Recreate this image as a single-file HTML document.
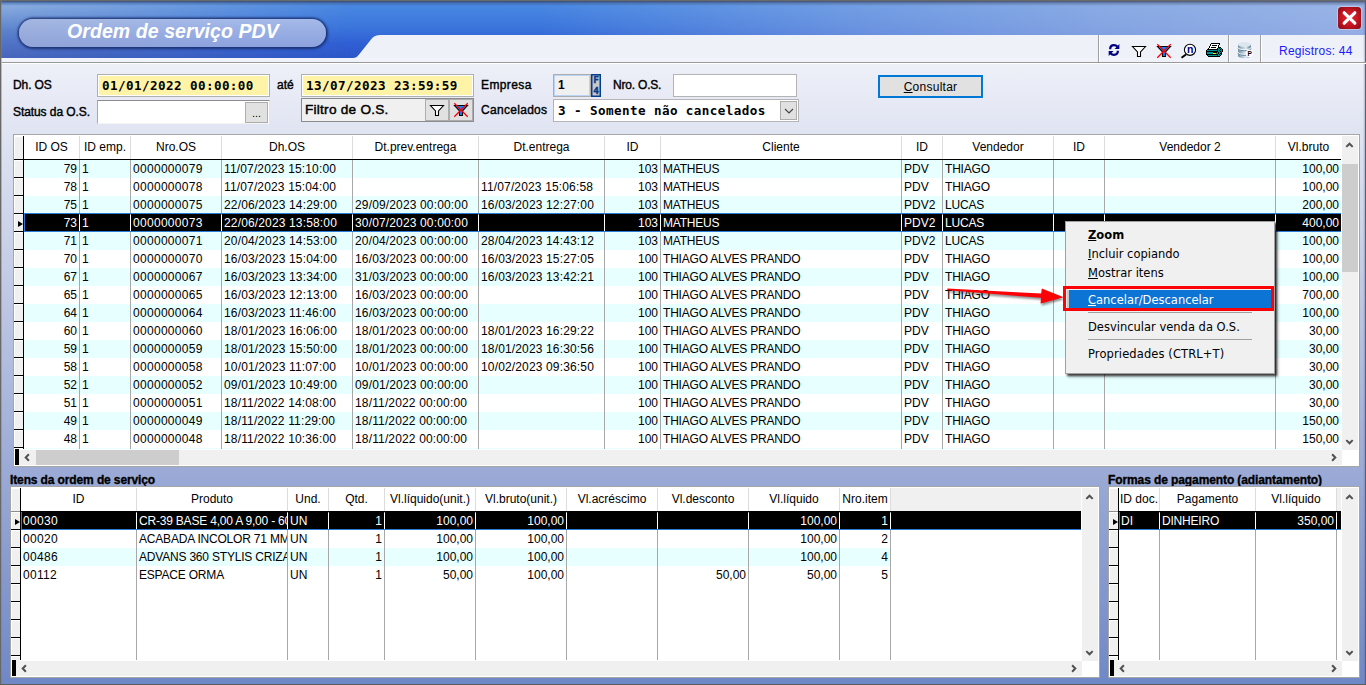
<!DOCTYPE html>
<html lang="pt-BR">
<head>
<meta charset="utf-8">
<title>Ordem de serviço PDV</title>
<style>
*{box-sizing:border-box;margin:0;padding:0}
html,body{width:1366px;height:685px;overflow:hidden;background:#e4e7f3;font-family:"Liberation Sans",Arial,sans-serif;font-size:12px;color:#000}
body{position:relative}
.abs,.grid,.grid>div{position:absolute}
/* window frame */
#frameL{left:0;top:0;width:2px;height:685px;background:linear-gradient(90deg,#686868 0,#686868 50%,rgba(120,125,140,.45) 50%,rgba(120,125,140,.45) 100%)}
#frameT{left:0;top:0;width:1366px;height:1px;background:#6a6a6a}
#hdr{left:1px;top:1px;width:1365px;height:57px;overflow:hidden;
 background:
 linear-gradient(180deg,rgba(50,55,75,.75) 0,rgba(50,60,90,.35) 2px,rgba(40,50,90,0) 5px),
 linear-gradient(90deg,rgba(172,190,230,0) 540px,rgba(172,190,230,.42) 860px,rgba(176,192,230,.62) 1100px,rgba(180,195,232,.75) 1365px),
 linear-gradient(180deg,#4b8be3 0,#3c76dc 45%,#2f5fd4 75%,#2c56c8 100%);}
#hdrL{left:1px;top:1px;width:352px;height:57px;background:linear-gradient(180deg,rgba(60,70,100,.0) 0,rgba(178,194,220,.62) 5px,rgba(120,145,195,.58) 50%,rgba(88,112,178,.6) 100%);-webkit-mask-image:linear-gradient(90deg,#000 0,rgba(0,0,0,.62) 150px,transparent 350px);mask-image:linear-gradient(90deg,#000 0,rgba(0,0,0,.62) 150px,transparent 350px)}
#upper{left:1px;top:58px;width:1364px;height:409px;background:linear-gradient(180deg,#f2f4fa 0,#eef0f8 6px,#9cabd6 100%)}
#lower{left:1px;top:467px;width:1364px;height:217px;background:linear-gradient(180deg,#9cabd6 0,#6f88c6 100%)}
#sep1{left:2px;top:62px;width:1364px;height:1px;background:#9a9a9a}
#sep2{left:2px;top:63px;width:1364px;height:1px;background:#fff}
#frameR{left:1363px;top:0;width:3px;height:685px;background:linear-gradient(90deg,rgba(110,120,160,.12) 0,rgba(110,120,160,.12) 33.3%,rgba(100,110,150,.3) 33.3%,rgba(100,110,150,.3) 66.6%,#5e6068 66.6%,#5e6068 100%)}
#frameB{left:0;top:684px;width:1366px;height:1px;background:#5c5c60}
#pill{left:19px;top:19px;width:307px;height:28px;border-radius:14px;background:linear-gradient(90deg,rgba(160,170,200,.25) 0,rgba(160,170,200,0) 60%),linear-gradient(180deg,#a5bae8 0,#97ade3 50%,#8da2dd 100%);box-shadow:0 0 2px 1.5px rgba(25,45,110,.8),1px 1px 3px 1px rgba(20,40,100,.5)}
#title{left:67px;top:19px;font:italic bold 19.5px "Liberation Sans",Arial,sans-serif;color:#fff;white-space:nowrap;line-height:24px;letter-spacing:.08px}
.lbl{white-space:nowrap;line-height:14px;font-size:12px;-webkit-text-stroke:.4px #000}
.inp{background:#fff;border:1px solid #a9a9a9;border-top-color:#8e8e8e}
.yel{background:#fff3a8;border:1px solid #b0b0b0;box-shadow:inset 0 0 0 1px #fff}
.mono{font:bold 12.6px "DejaVu Sans Mono","Liberation Mono",monospace;letter-spacing:.41px;white-space:nowrap}
/* grids */
.grid{background:#fff;box-shadow:inset 0 0 0 1px #a6a6a6;overflow:hidden}
.ind{background:#f0f0f0;border-top:1px solid #fff}
.indl{height:1px;background:#000}
.vblk{width:1px;background:#000}
.hblk{height:1px;background:#000}
.hc{background:#fff;text-align:center;line-height:24px;white-space:nowrap;overflow:hidden;font-size:12px;color:#000}
.hb{width:1px;background:#dcdcdc}
.hfill{background:#f0f0f0}
.row{background:#fff}
.row.alt{background:#e8ffff}
.row.sel{background:#000}
.c{height:18px;line-height:18px;white-space:nowrap;overflow:hidden;font-size:12px;padding:0 2px 0 2px}
.c.r{text-align:right}
.ls3{letter-spacing:.3px}.ls1{letter-spacing:.15px}.lsn{letter-spacing:-.2px}
.c.w{color:#fff}
.vb{width:1px;background:#a8a8a8}
.vbw{width:1px;background:#fff}
.selframe{border-top:1px solid #2a7ad8;border-bottom:1px solid #2a7ad8;border-left:1px solid #2a7ad8}
.selframe.nt{border-top:none}
.arrow{width:0;height:0;border-left:5px solid #000;border-top:3.5px solid transparent;border-bottom:3.5px solid transparent}
.trk{background:#f0f0f0}
.thumb{background:#cdcdcd}
.blk{background:#000}
.chev{position:absolute}
/* menu */
#menu{left:1065px;top:221px;width:210px;height:153px;background:#f0f0f0;border:1px solid #a0a0a0;box-shadow:2px 2px 2px rgba(0,0,0,.68),3px 3px 3px rgba(0,0,0,.25);font-family:"DejaVu Sans","Liberation Sans",sans-serif;font-size:11.5px}
#menu .mi{position:absolute;left:22px;white-space:nowrap;line-height:16px;color:#000}
#menu .ms{position:absolute;left:22px;width:164px;height:1px;background:#a0a0a0}
#menu u{text-decoration:underline;text-underline-offset:1px}
</style>
</head>
<body>
<div id="upper" class="abs"></div>
<div id="lower" class="abs"></div>
<div id="hdr" class="abs">
<svg class="abs" style="left:0;top:0" width="1365" height="57" viewBox="1 1 1365 57">
<path d="M352 58 C356 58 357 57 359 54.5 L371 39.5 C374 36 376 35 382 35 L1366 35 L1366 58 Z" fill="#eff1f8"/>
</svg>
</div>
<div id="hdrL" class="abs"></div>
<div id="frameT" class="abs"></div>
<div id="frameL" class="abs"></div>
<div id="frameR" class="abs"></div>
<div id="frameB" class="abs"></div>
<div id="sep1" class="abs"></div><div id="sep2" class="abs"></div>
<div id="pill" class="abs"></div>
<div id="title" class="abs">Ordem de serviço PDV</div>

<!-- close button -->
<div class="abs" style="left:1338px;top:7px;width:23px;height:22px;border-radius:3.5px;background:radial-gradient(ellipse at 50% 50%,#e21b2b 0,#d01724 40%,#a5101a 75%,#7d0b13 100%);box-shadow:0 0 0 1px rgba(225,215,235,.55)"></div>
<svg class="abs" style="left:1338px;top:7px" width="23" height="22" viewBox="0 0 23 22"><path d="M6.2 5.8 L16.8 16.2 M16.8 5.8 L6.2 16.2" stroke="#fff" stroke-width="3.2" stroke-linecap="round"/></svg>

<!-- toolbar -->
<div class="abs" style="left:1098px;top:35px;width:1px;height:27px;background:#a0a0a0"></div><div class="abs" style="left:1099px;top:35px;width:1px;height:27px;background:#fff"></div>
<div class="abs" style="left:1228px;top:35px;width:1px;height:27px;background:#a0a0a0"></div><div class="abs" style="left:1229px;top:35px;width:1px;height:27px;background:#fff"></div>
<div class="abs" style="left:1260px;top:35px;width:1px;height:27px;background:#a0a0a0"></div><div class="abs" style="left:1261px;top:35px;width:1px;height:27px;background:#fff"></div>
<svg class="abs" style="left:1104px;top:38px" width="152" height="24" viewBox="1104 38 152 24" shape-rendering="auto">
<!-- refresh -->
<g fill="none" stroke="#000080" stroke-width="2.2">
<path d="M1110.2 49.2 C1110.2 46.4 1112 45.2 1114 45.2 C1115.6 45.2 1116.6 45.8 1117.4 46.8"/>
<path d="M1117.9 50.8 C1117.9 53.6 1116 54.8 1114 54.8 C1112.4 54.8 1111.4 54.2 1110.6 53.2"/>
</g>
<path d="M1119.4 44 L1119.4 49 L1114.6 49 Z" fill="#000080"/>
<path d="M1108.7 56 L1108.7 51 L1113.5 51 Z" fill="#000080"/>
<!-- funnel -->
<path d="M1132.5 46.5 L1145.5 46.5 L1140.5 52 L1140.5 56.5 L1137.5 56.5 L1137.5 52 Z" fill="#fff" stroke="#000" stroke-width="1.1" stroke-linejoin="miter"/>
<!-- funnel X -->
<path d="M1157.5 46.5 L1170.5 46.5 L1165.5 52 L1165.5 56.5 L1162.5 56.5 L1162.5 52 Z" fill="#0a84ff" stroke="#000" stroke-width="1.1"/>
<path d="M1157.3 44.3 L1170.7 57.7 M1170.7 44.3 L1157.3 57.7" stroke="#ff0000" stroke-width="1.3"/>
<!-- magnifier -->
<path d="M1186 54.5 L1181.5 57.8" stroke="#000" stroke-width="2" stroke-linecap="butt"/>
<circle cx="1190" cy="49.8" r="5.6" fill="#fff" stroke="#000" stroke-width="1.1"/>
<text x="1190.1" y="53.4" font-family="Liberation Sans,Arial,sans-serif" font-weight="bold" font-size="10.5" text-anchor="middle" fill="#000080">n</text>
<!-- printer -->
<g shape-rendering="crispEdges">
<rect x="1211" y="43" width="9" height="1" fill="#000"/>
<rect x="1210" y="44" width="1" height="1" fill="#000"/>
<rect x="1211" y="44" width="8" height="1" fill="#fff"/>
<rect x="1219" y="44" width="1" height="1" fill="#000"/>
<rect x="1210" y="45" width="1" height="1" fill="#000"/>
<rect x="1211" y="45" width="1" height="1" fill="#fff"/>
<rect x="1212" y="45" width="5" height="1" fill="#000"/>
<rect x="1217" y="45" width="1" height="1" fill="#fff"/>
<rect x="1218" y="45" width="1" height="1" fill="#000"/>
<rect x="1209" y="46" width="1" height="1" fill="#000"/>
<rect x="1210" y="46" width="8" height="1" fill="#fff"/>
<rect x="1218" y="46" width="1" height="1" fill="#000"/>
<rect x="1209" y="47" width="1" height="1" fill="#000"/>
<rect x="1210" y="47" width="1" height="1" fill="#fff"/>
<rect x="1211" y="47" width="5" height="1" fill="#000"/>
<rect x="1216" y="47" width="2" height="1" fill="#fff"/>
<rect x="1218" y="47" width="1" height="1" fill="#000"/>
<rect x="1219" y="47" width="2" height="1" fill="#000"/>
<rect x="1208" y="48" width="1" height="1" fill="#000"/>
<rect x="1209" y="48" width="8" height="1" fill="#fff"/>
<rect x="1217" y="48" width="1" height="1" fill="#000"/>
<rect x="1218" y="48" width="1" height="1" fill="#009090"/>
<rect x="1219" y="48" width="1" height="1" fill="#000"/>
<rect x="1220" y="48" width="1" height="1" fill="#009090"/>
<rect x="1221" y="48" width="1" height="1" fill="#000"/>
<rect x="1207" y="49" width="11" height="1" fill="#000"/>
<rect x="1218" y="49" width="1" height="1" fill="#009090"/>
<rect x="1219" y="49" width="1" height="1" fill="#009090"/>
<rect x="1220" y="49" width="1" height="1" fill="#000"/>
<rect x="1221" y="49" width="1" height="1" fill="#009090"/>
<rect x="1222" y="49" width="1" height="1" fill="#000"/>
<rect x="1206" y="50" width="1" height="1" fill="#000"/>
<rect x="1207" y="50" width="10" height="1" fill="#009090"/>
<rect x="1217" y="50" width="1" height="1" fill="#000"/>
<rect x="1218" y="50" width="1" height="1" fill="#009090"/>
<rect x="1219" y="50" width="1" height="1" fill="#000"/>
<rect x="1220" y="50" width="2" height="1" fill="#009090"/>
<rect x="1222" y="50" width="1" height="1" fill="#000"/>
<rect x="1206" y="51" width="12" height="1" fill="#000"/>
<rect x="1218" y="51" width="1" height="1" fill="#009090"/>
<rect x="1219" y="51" width="1" height="1" fill="#009090"/>
<rect x="1220" y="51" width="1" height="1" fill="#000"/>
<rect x="1221" y="51" width="1" height="1" fill="#009090"/>
<rect x="1222" y="51" width="1" height="1" fill="#000"/>
<rect x="1206" y="52" width="1" height="1" fill="#000"/>
<rect x="1207" y="52" width="6" height="1" fill="#009090"/>
<rect x="1213" y="52" width="4" height="1" fill="#000"/>
<rect x="1217" y="52" width="1" height="1" fill="#009090"/>
<rect x="1218" y="52" width="1" height="1" fill="#000"/>
<rect x="1219" y="52" width="2" height="1" fill="#009090"/>
<rect x="1221" y="52" width="1" height="1" fill="#000"/>
<rect x="1206" y="53" width="1" height="1" fill="#000"/>
<rect x="1207" y="53" width="6" height="1" fill="#009090"/>
<rect x="1213" y="53" width="3" height="1" fill="#f5ee00"/>
<rect x="1216" y="53" width="2" height="1" fill="#009090"/>
<rect x="1218" y="53" width="1" height="1" fill="#000"/>
<rect x="1219" y="53" width="1" height="1" fill="#009090"/>
<rect x="1220" y="53" width="2" height="1" fill="#000"/>
<rect x="1206" y="54" width="12" height="1" fill="#000"/>
<rect x="1218" y="54" width="1" height="1" fill="#009090"/>
<rect x="1219" y="54" width="1" height="1" fill="#000"/>
<rect x="1220" y="54" width="1" height="1" fill="#009090"/>
<rect x="1221" y="54" width="1" height="1" fill="#000"/>
<rect x="1207" y="55" width="1" height="1" fill="#000"/>
<rect x="1208" y="55" width="9" height="1" fill="#009090"/>
<rect x="1217" y="55" width="1" height="1" fill="#000"/>
<rect x="1218" y="55" width="2" height="1" fill="#009090"/>
<rect x="1220" y="55" width="1" height="1" fill="#000"/>
<rect x="1208" y="56" width="12" height="1" fill="#000"/>
</g>
<!-- database -->
<defs><linearGradient id="dbg" x1="0" x2="1" y1="0" y2="0"><stop offset="0" stop-color="#6a899f"/><stop offset=".3" stop-color="#a9bfcd"/><stop offset=".62" stop-color="#e3ebf0"/><stop offset=".8" stop-color="#8fa9ba"/><stop offset="1" stop-color="#658399"/></linearGradient></defs>
<g>
<path d="M1238 53.6 L1238 56 A6.5 2.2 0 0 0 1251 56 L1251 53.6 A6.5 2.2 0 0 1 1238 53.6 Z" fill="url(#dbg)"/>
<path d="M1238 49 L1238 51.6 A6.5 2.2 0 0 0 1251 51.6 L1251 49 A6.5 2.2 0 0 1 1238 49 Z" fill="url(#dbg)"/>
<path d="M1238 53.2 A6.5 2.2 0 0 0 1251 53.2" fill="none" stroke="#5f7f96" stroke-width="1"/>
<path d="M1238 48.6 A6.5 2.2 0 0 0 1251 48.6" fill="none" stroke="#5f7f96" stroke-width="1"/>
<path d="M1238 44.6 L1238 47 A6.5 2.2 0 0 0 1251 47 L1251 44.6 Z" fill="url(#dbg)"/>
<ellipse cx="1244.5" cy="44.6" rx="6.5" ry="2.5" fill="#dde6ec"/>
<circle cx="1249.3" cy="53.5" r="3.7" fill="#fff"/>
<text x="1249.7" y="55.9" font-family="Liberation Sans,Arial,sans-serif" font-weight="bold" font-size="6.6" text-anchor="middle" fill="#000">P</text>
</g>
</svg>

<div class="abs" style="left:1279px;top:44px;font-size:12px;letter-spacing:.22px;color:#1a1aff;line-height:14px;white-space:nowrap">Registros: 44</div>

<!-- form -->
<div class="abs lbl" style="left:13px;top:78px;letter-spacing:-.1px">Dh. OS</div>
<div class="abs lbl" style="left:13px;top:105px;letter-spacing:-.08px">Status da O.S.</div>
<div class="abs yel" style="left:97px;top:74px;width:173px;height:23px"></div>
<div class="abs mono" style="left:102px;top:78px;line-height:16px">01/01/2022 00:00:00</div>
<div class="abs lbl" style="left:277px;top:78px">até</div>
<div class="abs yel" style="left:301px;top:74px;width:173px;height:23px"></div>
<div class="abs mono" style="left:306px;top:78px;line-height:16px">13/07/2023 23:59:59</div>
<div class="abs inp" style="left:97px;top:100px;width:173px;height:24px;border-bottom-color:#f4f4f4;border-right-color:#e6e6e6"></div>
<div class="abs" style="left:245px;top:102px;width:23px;height:21px;background:#e1e1e1;border:1px solid #adadad;text-align:center;line-height:20px;font-size:11px">...</div>
<div class="abs inp" style="left:301px;top:98px;width:173px;height:24px;background:#f0f0f0;border-color:#8c8c8c"></div>
<div class="abs" style="left:305px;top:102px;font-size:13.6px;line-height:16px;white-space:nowrap;letter-spacing:.25px;-webkit-text-stroke:.45px #000">Filtro de O.S.</div>
<div class="abs" style="left:425px;top:99px;width:24px;height:22px;background:#e1e1e1;border:1px solid #adadad"></div>
<div class="abs" style="left:449px;top:99px;width:24px;height:22px;background:#e1e1e1;border:1px solid #adadad"></div>
<svg class="abs" style="left:425px;top:99px" width="48" height="22" viewBox="425 99 48 22">
<path d="M430.5 105.5 L443.5 105.5 L438.5 111 L438.5 115.5 L435.5 115.5 L435.5 111 Z" fill="#fff" stroke="#000" stroke-width="1.1"/>
<path d="M454.5 105.5 L467.5 105.5 L462.5 111 L462.5 115.5 L459.5 115.5 L459.5 111 Z" fill="#0a84ff" stroke="#000" stroke-width="1.1"/>
<path d="M454.3 103.3 L467.7 116.7 M467.7 103.3 L454.3 116.7" stroke="#ff0000" stroke-width="1.3"/>
</svg>
<div class="abs lbl" style="left:481px;top:78px;letter-spacing:.4px">Empresa</div>
<div class="abs lbl" style="left:481px;top:103px;letter-spacing:.3px">Cancelados</div>
<div class="abs" style="left:553px;top:74px;width:38px;height:23px;background:#f0f0f0;border:1px solid #adadad;box-shadow:inset 0 0 0 1px #b9d4f5"></div>
<div class="abs" style="left:558px;top:78px;line-height:14px;font-weight:bold;font-size:12px">1</div>
<div class="abs" style="left:591px;top:74px;width:10px;height:23px;background:#c9c9c9;border:1px solid #063c8c;box-shadow:inset 0 0 0 .5px #063c8c"></div>
<div class="abs" style="left:591px;top:75px;width:10px;text-align:center;font:bold 9.5px 'DejaVu Sans Mono','Liberation Mono',monospace;line-height:10.5px;color:#063c8c;-webkit-text-stroke:.4px #063c8c">F<br>4</div>
<div class="abs lbl" style="left:613px;top:78px;letter-spacing:-.2px">Nro. O.S.</div>
<div class="abs inp" style="left:673px;top:74px;width:124px;height:23px;border-color:#b4b4b4"></div>
<div class="abs inp" style="left:553px;top:99px;width:246px;height:23px;border-color:#b4b4b4"></div>
<div class="abs mono" style="left:558px;top:103px;line-height:16px">3 - Somente não cancelados</div>
<div class="abs" style="left:780px;top:101px;width:17px;height:19px;background:#e1e1e1;border:1px solid #adadad"></div>
<svg class="abs" style="left:784px;top:108px" width="10" height="6" viewBox="0 0 10 6"><path d="M1 1 L5 5 L9 1" fill="none" stroke="#444" stroke-width="1.1"/></svg>
<div class="abs" style="left:878px;top:75px;width:105px;height:23px;background:#e1e1e1;border:2px solid #0078d7"></div>
<div class="abs" style="left:878px;top:80px;width:105px;text-align:center;line-height:14px;letter-spacing:.25px"><u>C</u>onsultar</div>

<div id="g1" class="grid" style="left:13px;top:134px;width:1347px;height:333px">
<div class="ind" style="left:2px;top:2px;width:8px;height:23px"></div>
<div class="hc" style="left:11px;top:2px;width:55px;height:23px;line-height:22px">ID OS</div>
<div class="hb" style="left:66px;top:2px;height:23px"></div>
<div class="hc" style="left:67px;top:2px;width:50px;height:23px;line-height:22px">ID emp.</div>
<div class="hb" style="left:117px;top:2px;height:23px"></div>
<div class="hc" style="left:118px;top:2px;width:90px;height:23px;line-height:22px">Nro.OS</div>
<div class="hb" style="left:208px;top:2px;height:23px"></div>
<div class="hc" style="left:209px;top:2px;width:130px;height:23px;line-height:22px">Dh.OS</div>
<div class="hb" style="left:339px;top:2px;height:23px"></div>
<div class="hc" style="left:340px;top:2px;width:125px;height:23px;line-height:22px">Dt.prev.entrega</div>
<div class="hb" style="left:465px;top:2px;height:23px"></div>
<div class="hc" style="left:466px;top:2px;width:125px;height:23px;line-height:22px">Dt.entrega</div>
<div class="hb" style="left:591px;top:2px;height:23px"></div>
<div class="hc" style="left:592px;top:2px;width:55px;height:23px;line-height:22px">ID</div>
<div class="hb" style="left:647px;top:2px;height:23px"></div>
<div class="hc" style="left:648px;top:2px;width:240px;height:23px;line-height:22px">Cliente</div>
<div class="hb" style="left:888px;top:2px;height:23px"></div>
<div class="hc" style="left:889px;top:2px;width:40px;height:23px;line-height:22px">ID</div>
<div class="hb" style="left:929px;top:2px;height:23px"></div>
<div class="hc" style="left:930px;top:2px;width:110px;height:23px;line-height:22px">Vendedor</div>
<div class="hb" style="left:1040px;top:2px;height:23px"></div>
<div class="hc" style="left:1041px;top:2px;width:50px;height:23px;line-height:22px">ID</div>
<div class="hb" style="left:1091px;top:2px;height:23px"></div>
<div class="hc" style="left:1092px;top:2px;width:170px;height:23px;line-height:22px">Vendedor 2</div>
<div class="hb" style="left:1262px;top:2px;height:23px"></div>
<div class="hc" style="left:1263px;top:2px;width:65px;height:23px;line-height:22px">Vl.bruto</div>
<div class="hblk" style="left:1px;top:25px;width:1327px"></div>
<div class="row alt" style="left:11px;top:26px;width:1317px;height:18px"></div>
<div class="c r" style="left:11px;top:26px;width:55px">79</div>
<div class="c l" style="left:67px;top:26px;width:50px">1</div>
<div class="c l ls3" style="left:118px;top:26px;width:90px">0000000079</div>
<div class="c l ls1" style="left:209px;top:26px;width:130px">11/07/2023 15:10:00</div>
<div class="c r" style="left:592px;top:26px;width:55px">103</div>
<div class="c l lsn" style="left:648px;top:26px;width:240px">MATHEUS</div>
<div class="c l" style="left:889px;top:26px;width:40px">PDV</div>
<div class="c l lsn" style="left:930px;top:26px;width:110px">THIAGO</div>
<div class="c r" style="left:1263px;top:26px;width:65px">100,00</div>
<div class="row" style="left:11px;top:44px;width:1317px;height:18px"></div>
<div class="c r" style="left:11px;top:44px;width:55px">78</div>
<div class="c l" style="left:67px;top:44px;width:50px">1</div>
<div class="c l ls3" style="left:118px;top:44px;width:90px">0000000078</div>
<div class="c l ls1" style="left:209px;top:44px;width:130px">11/07/2023 15:04:00</div>
<div class="c l ls1" style="left:466px;top:44px;width:125px">11/07/2023 15:06:58</div>
<div class="c r" style="left:592px;top:44px;width:55px">103</div>
<div class="c l lsn" style="left:648px;top:44px;width:240px">MATHEUS</div>
<div class="c l" style="left:889px;top:44px;width:40px">PDV</div>
<div class="c l lsn" style="left:930px;top:44px;width:110px">THIAGO</div>
<div class="c r" style="left:1263px;top:44px;width:65px">100,00</div>
<div class="row alt" style="left:11px;top:62px;width:1317px;height:18px"></div>
<div class="c r" style="left:11px;top:62px;width:55px">75</div>
<div class="c l" style="left:67px;top:62px;width:50px">1</div>
<div class="c l ls3" style="left:118px;top:62px;width:90px">0000000075</div>
<div class="c l ls1" style="left:209px;top:62px;width:130px">22/06/2023 14:29:00</div>
<div class="c l ls1" style="left:340px;top:62px;width:125px">29/09/2023 00:00:00</div>
<div class="c l ls1" style="left:466px;top:62px;width:125px">16/03/2023 12:27:00</div>
<div class="c r" style="left:592px;top:62px;width:55px">103</div>
<div class="c l lsn" style="left:648px;top:62px;width:240px">MATHEUS</div>
<div class="c l" style="left:889px;top:62px;width:40px">PDV2</div>
<div class="c l lsn" style="left:930px;top:62px;width:110px">LUCAS</div>
<div class="c r" style="left:1263px;top:62px;width:65px">200,00</div>
<div class="row sel" style="left:11px;top:80px;width:1317px;height:18px"></div>
<div class="c r w" style="left:11px;top:80px;width:55px">73</div>
<div class="c l w" style="left:67px;top:80px;width:50px">1</div>
<div class="c l w ls3" style="left:118px;top:80px;width:90px">0000000073</div>
<div class="c l w ls1" style="left:209px;top:80px;width:130px">22/06/2023 13:58:00</div>
<div class="c l w ls1" style="left:340px;top:80px;width:125px">30/07/2023 00:00:00</div>
<div class="c r w" style="left:592px;top:80px;width:55px">103</div>
<div class="c l w lsn" style="left:648px;top:80px;width:240px">MATHEUS</div>
<div class="c l w" style="left:889px;top:80px;width:40px">PDV2</div>
<div class="c l w lsn" style="left:930px;top:80px;width:110px">LUCAS</div>
<div class="c r w" style="left:1263px;top:80px;width:65px">400,00</div>
<div class="row alt" style="left:11px;top:98px;width:1317px;height:18px"></div>
<div class="c r" style="left:11px;top:98px;width:55px">71</div>
<div class="c l" style="left:67px;top:98px;width:50px">1</div>
<div class="c l ls3" style="left:118px;top:98px;width:90px">0000000071</div>
<div class="c l ls1" style="left:209px;top:98px;width:130px">20/04/2023 14:53:00</div>
<div class="c l ls1" style="left:340px;top:98px;width:125px">20/04/2023 00:00:00</div>
<div class="c l ls1" style="left:466px;top:98px;width:125px">28/04/2023 14:43:12</div>
<div class="c r" style="left:592px;top:98px;width:55px">103</div>
<div class="c l lsn" style="left:648px;top:98px;width:240px">MATHEUS</div>
<div class="c l" style="left:889px;top:98px;width:40px">PDV2</div>
<div class="c l lsn" style="left:930px;top:98px;width:110px">LUCAS</div>
<div class="c r" style="left:1263px;top:98px;width:65px">100,00</div>
<div class="row" style="left:11px;top:116px;width:1317px;height:18px"></div>
<div class="c r" style="left:11px;top:116px;width:55px">70</div>
<div class="c l" style="left:67px;top:116px;width:50px">1</div>
<div class="c l ls3" style="left:118px;top:116px;width:90px">0000000070</div>
<div class="c l ls1" style="left:209px;top:116px;width:130px">16/03/2023 15:04:00</div>
<div class="c l ls1" style="left:340px;top:116px;width:125px">16/03/2023 00:00:00</div>
<div class="c l ls1" style="left:466px;top:116px;width:125px">16/03/2023 15:27:05</div>
<div class="c r" style="left:592px;top:116px;width:55px">100</div>
<div class="c l lsn" style="left:648px;top:116px;width:240px">THIAGO ALVES PRANDO</div>
<div class="c l" style="left:889px;top:116px;width:40px">PDV</div>
<div class="c l lsn" style="left:930px;top:116px;width:110px">THIAGO</div>
<div class="c r" style="left:1263px;top:116px;width:65px">100,00</div>
<div class="row alt" style="left:11px;top:134px;width:1317px;height:18px"></div>
<div class="c r" style="left:11px;top:134px;width:55px">67</div>
<div class="c l" style="left:67px;top:134px;width:50px">1</div>
<div class="c l ls3" style="left:118px;top:134px;width:90px">0000000067</div>
<div class="c l ls1" style="left:209px;top:134px;width:130px">16/03/2023 13:34:00</div>
<div class="c l ls1" style="left:340px;top:134px;width:125px">31/03/2023 00:00:00</div>
<div class="c l ls1" style="left:466px;top:134px;width:125px">16/03/2023 13:42:21</div>
<div class="c r" style="left:592px;top:134px;width:55px">100</div>
<div class="c l lsn" style="left:648px;top:134px;width:240px">THIAGO ALVES PRANDO</div>
<div class="c l" style="left:889px;top:134px;width:40px">PDV</div>
<div class="c l lsn" style="left:930px;top:134px;width:110px">THIAGO</div>
<div class="c r" style="left:1263px;top:134px;width:65px">100,00</div>
<div class="row" style="left:11px;top:152px;width:1317px;height:18px"></div>
<div class="c r" style="left:11px;top:152px;width:55px">65</div>
<div class="c l" style="left:67px;top:152px;width:50px">1</div>
<div class="c l ls3" style="left:118px;top:152px;width:90px">0000000065</div>
<div class="c l ls1" style="left:209px;top:152px;width:130px">16/03/2023 12:13:00</div>
<div class="c l ls1" style="left:340px;top:152px;width:125px">16/03/2023 00:00:00</div>
<div class="c r" style="left:592px;top:152px;width:55px">100</div>
<div class="c l lsn" style="left:648px;top:152px;width:240px">THIAGO ALVES PRANDO</div>
<div class="c l" style="left:889px;top:152px;width:40px">PDV</div>
<div class="c l lsn" style="left:930px;top:152px;width:110px">THIAGO</div>
<div class="c r" style="left:1263px;top:152px;width:65px">700,00</div>
<div class="row alt" style="left:11px;top:170px;width:1317px;height:18px"></div>
<div class="c r" style="left:11px;top:170px;width:55px">64</div>
<div class="c l" style="left:67px;top:170px;width:50px">1</div>
<div class="c l ls3" style="left:118px;top:170px;width:90px">0000000064</div>
<div class="c l ls1" style="left:209px;top:170px;width:130px">16/03/2023 11:46:00</div>
<div class="c l ls1" style="left:340px;top:170px;width:125px">16/03/2023 00:00:00</div>
<div class="c r" style="left:592px;top:170px;width:55px">100</div>
<div class="c l lsn" style="left:648px;top:170px;width:240px">THIAGO ALVES PRANDO</div>
<div class="c l" style="left:889px;top:170px;width:40px">PDV</div>
<div class="c l lsn" style="left:930px;top:170px;width:110px">THIAGO</div>
<div class="c r" style="left:1263px;top:170px;width:65px">100,00</div>
<div class="row" style="left:11px;top:188px;width:1317px;height:18px"></div>
<div class="c r" style="left:11px;top:188px;width:55px">60</div>
<div class="c l" style="left:67px;top:188px;width:50px">1</div>
<div class="c l ls3" style="left:118px;top:188px;width:90px">0000000060</div>
<div class="c l ls1" style="left:209px;top:188px;width:130px">18/01/2023 16:06:00</div>
<div class="c l ls1" style="left:340px;top:188px;width:125px">18/01/2023 00:00:00</div>
<div class="c l ls1" style="left:466px;top:188px;width:125px">18/01/2023 16:29:22</div>
<div class="c r" style="left:592px;top:188px;width:55px">100</div>
<div class="c l lsn" style="left:648px;top:188px;width:240px">THIAGO ALVES PRANDO</div>
<div class="c l" style="left:889px;top:188px;width:40px">PDV</div>
<div class="c l lsn" style="left:930px;top:188px;width:110px">THIAGO</div>
<div class="c r" style="left:1263px;top:188px;width:65px">30,00</div>
<div class="row alt" style="left:11px;top:206px;width:1317px;height:18px"></div>
<div class="c r" style="left:11px;top:206px;width:55px">59</div>
<div class="c l" style="left:67px;top:206px;width:50px">1</div>
<div class="c l ls3" style="left:118px;top:206px;width:90px">0000000059</div>
<div class="c l ls1" style="left:209px;top:206px;width:130px">18/01/2023 15:50:00</div>
<div class="c l ls1" style="left:340px;top:206px;width:125px">18/01/2023 00:00:00</div>
<div class="c l ls1" style="left:466px;top:206px;width:125px">18/01/2023 16:30:56</div>
<div class="c r" style="left:592px;top:206px;width:55px">100</div>
<div class="c l lsn" style="left:648px;top:206px;width:240px">THIAGO ALVES PRANDO</div>
<div class="c l" style="left:889px;top:206px;width:40px">PDV</div>
<div class="c l lsn" style="left:930px;top:206px;width:110px">THIAGO</div>
<div class="c r" style="left:1263px;top:206px;width:65px">30,00</div>
<div class="row" style="left:11px;top:224px;width:1317px;height:18px"></div>
<div class="c r" style="left:11px;top:224px;width:55px">58</div>
<div class="c l" style="left:67px;top:224px;width:50px">1</div>
<div class="c l ls3" style="left:118px;top:224px;width:90px">0000000058</div>
<div class="c l ls1" style="left:209px;top:224px;width:130px">10/01/2023 11:07:00</div>
<div class="c l ls1" style="left:340px;top:224px;width:125px">10/01/2023 00:00:00</div>
<div class="c l ls1" style="left:466px;top:224px;width:125px">10/02/2023 09:36:50</div>
<div class="c r" style="left:592px;top:224px;width:55px">100</div>
<div class="c l lsn" style="left:648px;top:224px;width:240px">THIAGO ALVES PRANDO</div>
<div class="c l" style="left:889px;top:224px;width:40px">PDV</div>
<div class="c l lsn" style="left:930px;top:224px;width:110px">THIAGO</div>
<div class="c r" style="left:1263px;top:224px;width:65px">30,00</div>
<div class="row alt" style="left:11px;top:242px;width:1317px;height:18px"></div>
<div class="c r" style="left:11px;top:242px;width:55px">52</div>
<div class="c l" style="left:67px;top:242px;width:50px">1</div>
<div class="c l ls3" style="left:118px;top:242px;width:90px">0000000052</div>
<div class="c l ls1" style="left:209px;top:242px;width:130px">09/01/2023 10:49:00</div>
<div class="c l ls1" style="left:340px;top:242px;width:125px">09/01/2023 00:00:00</div>
<div class="c r" style="left:592px;top:242px;width:55px">100</div>
<div class="c l lsn" style="left:648px;top:242px;width:240px">THIAGO ALVES PRANDO</div>
<div class="c l" style="left:889px;top:242px;width:40px">PDV</div>
<div class="c l lsn" style="left:930px;top:242px;width:110px">THIAGO</div>
<div class="c r" style="left:1263px;top:242px;width:65px">30,00</div>
<div class="row" style="left:11px;top:260px;width:1317px;height:18px"></div>
<div class="c r" style="left:11px;top:260px;width:55px">51</div>
<div class="c l" style="left:67px;top:260px;width:50px">1</div>
<div class="c l ls3" style="left:118px;top:260px;width:90px">0000000051</div>
<div class="c l ls1" style="left:209px;top:260px;width:130px">18/11/2022 14:08:00</div>
<div class="c l ls1" style="left:340px;top:260px;width:125px">18/11/2022 00:00:00</div>
<div class="c r" style="left:592px;top:260px;width:55px">100</div>
<div class="c l lsn" style="left:648px;top:260px;width:240px">THIAGO ALVES PRANDO</div>
<div class="c l" style="left:889px;top:260px;width:40px">PDV</div>
<div class="c l lsn" style="left:930px;top:260px;width:110px">THIAGO</div>
<div class="c r" style="left:1263px;top:260px;width:65px">30,00</div>
<div class="row alt" style="left:11px;top:278px;width:1317px;height:18px"></div>
<div class="c r" style="left:11px;top:278px;width:55px">49</div>
<div class="c l" style="left:67px;top:278px;width:50px">1</div>
<div class="c l ls3" style="left:118px;top:278px;width:90px">0000000049</div>
<div class="c l ls1" style="left:209px;top:278px;width:130px">18/11/2022 11:29:00</div>
<div class="c l ls1" style="left:340px;top:278px;width:125px">18/11/2022 00:00:00</div>
<div class="c r" style="left:592px;top:278px;width:55px">100</div>
<div class="c l lsn" style="left:648px;top:278px;width:240px">THIAGO ALVES PRANDO</div>
<div class="c l" style="left:889px;top:278px;width:40px">PDV</div>
<div class="c l lsn" style="left:930px;top:278px;width:110px">THIAGO</div>
<div class="c r" style="left:1263px;top:278px;width:65px">150,00</div>
<div class="row" style="left:11px;top:296px;width:1317px;height:18px"></div>
<div class="c r" style="left:11px;top:296px;width:55px">48</div>
<div class="c l" style="left:67px;top:296px;width:50px">1</div>
<div class="c l ls3" style="left:118px;top:296px;width:90px">0000000048</div>
<div class="c l ls1" style="left:209px;top:296px;width:130px">18/11/2022 10:36:00</div>
<div class="c l ls1" style="left:340px;top:296px;width:125px">18/11/2022 00:00:00</div>
<div class="c r" style="left:592px;top:296px;width:55px">100</div>
<div class="c l lsn" style="left:648px;top:296px;width:240px">THIAGO ALVES PRANDO</div>
<div class="c l" style="left:889px;top:296px;width:40px">PDV</div>
<div class="c l lsn" style="left:930px;top:296px;width:110px">THIAGO</div>
<div class="c r" style="left:1263px;top:296px;width:65px">150,00</div>
<div class="row alt" style="left:11px;top:314px;width:1317px;height:1px"></div>
<div class="ind" style="left:2px;top:26px;width:8px;height:17px"></div>
<div class="indl" style="left:1px;top:43px;width:9px"></div>
<div class="ind" style="left:2px;top:44px;width:8px;height:17px"></div>
<div class="indl" style="left:1px;top:61px;width:9px"></div>
<div class="ind" style="left:2px;top:62px;width:8px;height:17px"></div>
<div class="indl" style="left:1px;top:79px;width:9px"></div>
<div class="ind" style="left:2px;top:80px;width:8px;height:17px"></div>
<div class="indl" style="left:1px;top:97px;width:9px"></div>
<div class="ind" style="left:2px;top:98px;width:8px;height:17px"></div>
<div class="indl" style="left:1px;top:115px;width:9px"></div>
<div class="ind" style="left:2px;top:116px;width:8px;height:17px"></div>
<div class="indl" style="left:1px;top:133px;width:9px"></div>
<div class="ind" style="left:2px;top:134px;width:8px;height:17px"></div>
<div class="indl" style="left:1px;top:151px;width:9px"></div>
<div class="ind" style="left:2px;top:152px;width:8px;height:17px"></div>
<div class="indl" style="left:1px;top:169px;width:9px"></div>
<div class="ind" style="left:2px;top:170px;width:8px;height:17px"></div>
<div class="indl" style="left:1px;top:187px;width:9px"></div>
<div class="ind" style="left:2px;top:188px;width:8px;height:17px"></div>
<div class="indl" style="left:1px;top:205px;width:9px"></div>
<div class="ind" style="left:2px;top:206px;width:8px;height:17px"></div>
<div class="indl" style="left:1px;top:223px;width:9px"></div>
<div class="ind" style="left:2px;top:224px;width:8px;height:17px"></div>
<div class="indl" style="left:1px;top:241px;width:9px"></div>
<div class="ind" style="left:2px;top:242px;width:8px;height:17px"></div>
<div class="indl" style="left:1px;top:259px;width:9px"></div>
<div class="ind" style="left:2px;top:260px;width:8px;height:17px"></div>
<div class="indl" style="left:1px;top:277px;width:9px"></div>
<div class="ind" style="left:2px;top:278px;width:8px;height:17px"></div>
<div class="indl" style="left:1px;top:295px;width:9px"></div>
<div class="ind" style="left:2px;top:296px;width:8px;height:17px"></div>
<div class="indl" style="left:1px;top:313px;width:9px"></div>
<div class="vblk" style="left:10px;top:2px;height:313px"></div>
<div class="vb" style="left:66px;top:26px;height:289px"></div>
<div class="vb" style="left:117px;top:26px;height:289px"></div>
<div class="vb" style="left:208px;top:26px;height:289px"></div>
<div class="vb" style="left:339px;top:26px;height:289px"></div>
<div class="vb" style="left:465px;top:26px;height:289px"></div>
<div class="vb" style="left:591px;top:26px;height:289px"></div>
<div class="vb" style="left:647px;top:26px;height:289px"></div>
<div class="vb" style="left:888px;top:26px;height:289px"></div>
<div class="vb" style="left:929px;top:26px;height:289px"></div>
<div class="vb" style="left:1040px;top:26px;height:289px"></div>
<div class="vb" style="left:1091px;top:26px;height:289px"></div>
<div class="vb" style="left:1262px;top:26px;height:289px"></div>
<div class="vbw" style="left:66px;top:81px;height:16px"></div>
<div class="vbw" style="left:117px;top:81px;height:16px"></div>
<div class="vbw" style="left:208px;top:81px;height:16px"></div>
<div class="vbw" style="left:339px;top:81px;height:16px"></div>
<div class="vbw" style="left:465px;top:81px;height:16px"></div>
<div class="vbw" style="left:591px;top:81px;height:16px"></div>
<div class="vbw" style="left:647px;top:81px;height:16px"></div>
<div class="vbw" style="left:888px;top:81px;height:16px"></div>
<div class="vbw" style="left:929px;top:81px;height:16px"></div>
<div class="vbw" style="left:1040px;top:81px;height:16px"></div>
<div class="vbw" style="left:1091px;top:81px;height:16px"></div>
<div class="vbw" style="left:1262px;top:81px;height:16px"></div>
<div class="selframe" style="left:11px;top:79px;width:1317px;height:19px"></div>
<div class="arrow" style="left:5px;top:87px"></div>
<div class="trk" style="left:1329px;top:2px;width:16px;height:314px"></div>
<div class="thumb" style="left:1329px;top:30px;width:16px;height:108px"></div>
<svg class="chev" style="left:1332px;top:8px" width="9" height="6" viewBox="0 0 9 6"><path d="M1.3 4.9 L4.5 1.7 L7.7 4.9" fill="none" stroke="#505050" stroke-width="2"/></svg>
<svg class="chev" style="left:1332px;top:305px" width="9" height="6" viewBox="0 0 9 6"><path d="M1.3 1.1 L4.5 4.3 L7.7 1.1" fill="none" stroke="#505050" stroke-width="2"/></svg>
<div class="trk" style="left:2px;top:316px;width:1327px;height:15px"></div>
<div class="blk" style="left:2px;top:315px;width:4px;height:16px"></div>
<div class="thumb" style="left:23px;top:316px;width:143px;height:15px"></div>
<svg class="chev" style="left:11px;top:319px" width="6" height="9" viewBox="0 0 6 9"><path d="M4.9 1.3 L1.7 4.5 L4.9 7.7" fill="none" stroke="#505050" stroke-width="2"/></svg>
<svg class="chev" style="left:1318px;top:319px" width="6" height="9" viewBox="0 0 6 9"><path d="M1.1 1.3 L4.3 4.5 L1.1 7.7" fill="none" stroke="#505050" stroke-width="2"/></svg>
</div>
<div class="abs" style="left:10px;top:473px;font-weight:bold;font-size:12px;line-height:14px;white-space:nowrap;color:#000;-webkit-text-stroke:.35px #000;letter-spacing:-.12px">Itens da ordem de serviço</div>
<div class="abs" style="left:1108px;top:473px;font-weight:bold;font-size:12px;line-height:14px;white-space:nowrap;color:#000;-webkit-text-stroke:.35px #000;letter-spacing:-.1px">Formas de pagamento (adiantamento)</div>
<div id="g2" class="grid" style="left:10px;top:486px;width:1090px;height:192px">
<div class="ind" style="left:2px;top:2px;width:8px;height:23px"></div>
<div class="hfill" style="left:881px;top:2px;width:190px;height:23px"></div>
<div class="hc" style="left:11px;top:2px;width:115px;height:23px;line-height:22px">ID</div>
<div class="hb" style="left:126px;top:2px;height:23px"></div>
<div class="hc" style="left:127px;top:2px;width:150px;height:23px;line-height:22px">Produto</div>
<div class="hb" style="left:277px;top:2px;height:23px"></div>
<div class="hc" style="left:278px;top:2px;width:40px;height:23px;line-height:22px">Und.</div>
<div class="hb" style="left:318px;top:2px;height:23px"></div>
<div class="hc" style="left:319px;top:2px;width:55px;height:23px;line-height:22px">Qtd.</div>
<div class="hb" style="left:374px;top:2px;height:23px"></div>
<div class="hc" style="left:375px;top:2px;width:90px;height:23px;line-height:22px">Vl.líquido(unit.)</div>
<div class="hb" style="left:465px;top:2px;height:23px"></div>
<div class="hc" style="left:466px;top:2px;width:90px;height:23px;line-height:22px">Vl.bruto(unit.)</div>
<div class="hb" style="left:556px;top:2px;height:23px"></div>
<div class="hc" style="left:557px;top:2px;width:90px;height:23px;line-height:22px">Vl.acréscimo</div>
<div class="hb" style="left:647px;top:2px;height:23px"></div>
<div class="hc" style="left:648px;top:2px;width:90px;height:23px;line-height:22px">Vl.desconto</div>
<div class="hb" style="left:738px;top:2px;height:23px"></div>
<div class="hc" style="left:739px;top:2px;width:90px;height:23px;line-height:22px">Vl.líquido</div>
<div class="hb" style="left:829px;top:2px;height:23px"></div>
<div class="hc" style="left:830px;top:2px;width:50px;height:23px;line-height:22px">Nro.item</div>
<div class="hb" style="left:880px;top:2px;height:23px"></div>
<div class="hblk" style="left:10px;top:25px;width:1061px"></div>
<div class="hblk" style="left:1px;top:25px;width:9px;background:#8c8c8c"></div>
<div class="row sel" style="left:11px;top:26px;width:1060px;height:18px"></div>
<div class="c l w ls3" style="left:11px;top:26px;width:115px">00030</div>
<div class="c l w lsn" style="left:127px;top:26px;width:150px">CR-39 BASE 4,00 A 9,00 - 60MM</div>
<div class="c l w" style="left:278px;top:26px;width:40px">UN</div>
<div class="c r w" style="left:319px;top:26px;width:55px">1</div>
<div class="c r w" style="left:375px;top:26px;width:90px">100,00</div>
<div class="c r w" style="left:466px;top:26px;width:90px">100,00</div>
<div class="c r w" style="left:739px;top:26px;width:90px">100,00</div>
<div class="c r w" style="left:830px;top:26px;width:50px">1</div>
<div class="row" style="left:11px;top:44px;width:869px;height:18px"></div>
<div class="c l ls3" style="left:11px;top:44px;width:115px">00020</div>
<div class="c l lsn" style="left:127px;top:44px;width:150px">ACABADA INCOLOR 71 MM</div>
<div class="c l" style="left:278px;top:44px;width:40px">UN</div>
<div class="c r" style="left:319px;top:44px;width:55px">1</div>
<div class="c r" style="left:375px;top:44px;width:90px">100,00</div>
<div class="c r" style="left:466px;top:44px;width:90px">100,00</div>
<div class="c r" style="left:739px;top:44px;width:90px">100,00</div>
<div class="c r" style="left:830px;top:44px;width:50px">2</div>
<div class="row alt" style="left:11px;top:62px;width:869px;height:18px"></div>
<div class="c l ls3" style="left:11px;top:62px;width:115px">00486</div>
<div class="c l lsn" style="left:127px;top:62px;width:150px">ADVANS 360 STYLIS CRIZAL</div>
<div class="c l" style="left:278px;top:62px;width:40px">UN</div>
<div class="c r" style="left:319px;top:62px;width:55px">1</div>
<div class="c r" style="left:375px;top:62px;width:90px">100,00</div>
<div class="c r" style="left:466px;top:62px;width:90px">100,00</div>
<div class="c r" style="left:739px;top:62px;width:90px">100,00</div>
<div class="c r" style="left:830px;top:62px;width:50px">4</div>
<div class="row" style="left:11px;top:80px;width:869px;height:18px"></div>
<div class="c l ls3" style="left:11px;top:80px;width:115px">00112</div>
<div class="c l lsn" style="left:127px;top:80px;width:150px">ESPACE ORMA</div>
<div class="c l" style="left:278px;top:80px;width:40px">UN</div>
<div class="c r" style="left:319px;top:80px;width:55px">1</div>
<div class="c r" style="left:375px;top:80px;width:90px">50,00</div>
<div class="c r" style="left:466px;top:80px;width:90px">100,00</div>
<div class="c r" style="left:648px;top:80px;width:90px">50,00</div>
<div class="c r" style="left:739px;top:80px;width:90px">50,00</div>
<div class="c r" style="left:830px;top:80px;width:50px">5</div>
<div class="ind" style="left:2px;top:26px;width:8px;height:17px"></div>
<div class="indl" style="left:1px;top:43px;width:9px"></div>
<div class="ind" style="left:2px;top:44px;width:8px;height:17px"></div>
<div class="indl" style="left:1px;top:61px;width:9px"></div>
<div class="ind" style="left:2px;top:62px;width:8px;height:17px"></div>
<div class="indl" style="left:1px;top:79px;width:9px"></div>
<div class="ind" style="left:2px;top:80px;width:8px;height:17px"></div>
<div class="indl" style="left:1px;top:97px;width:9px"></div>
<div class="ind" style="left:2px;top:98px;width:8px;height:17px"></div>
<div class="indl" style="left:1px;top:115px;width:9px"></div>
<div class="ind" style="left:2px;top:116px;width:8px;height:17px"></div>
<div class="indl" style="left:1px;top:133px;width:9px"></div>
<div class="ind" style="left:2px;top:134px;width:8px;height:17px"></div>
<div class="indl" style="left:1px;top:151px;width:9px"></div>
<div class="ind" style="left:2px;top:152px;width:8px;height:17px"></div>
<div class="indl" style="left:1px;top:169px;width:9px"></div>
<div class="ind" style="left:2px;top:170px;width:8px;height:5px"></div>
<div class="vblk" style="left:10px;top:2px;height:172px"></div>
<div class="vb" style="left:126px;top:26px;height:148px"></div>
<div class="vb" style="left:277px;top:26px;height:148px"></div>
<div class="vb" style="left:318px;top:26px;height:148px"></div>
<div class="vb" style="left:374px;top:26px;height:148px"></div>
<div class="vb" style="left:465px;top:26px;height:148px"></div>
<div class="vb" style="left:556px;top:26px;height:148px"></div>
<div class="vb" style="left:647px;top:26px;height:148px"></div>
<div class="vb" style="left:738px;top:26px;height:148px"></div>
<div class="vb" style="left:829px;top:26px;height:148px"></div>
<div class="vb" style="left:880px;top:26px;height:148px"></div>
<div class="vbw" style="left:126px;top:27px;height:16px"></div>
<div class="vbw" style="left:277px;top:27px;height:16px"></div>
<div class="vbw" style="left:318px;top:27px;height:16px"></div>
<div class="vbw" style="left:374px;top:27px;height:16px"></div>
<div class="vbw" style="left:465px;top:27px;height:16px"></div>
<div class="vbw" style="left:556px;top:27px;height:16px"></div>
<div class="vbw" style="left:647px;top:27px;height:16px"></div>
<div class="vbw" style="left:738px;top:27px;height:16px"></div>
<div class="vbw" style="left:829px;top:27px;height:16px"></div>
<div class="vbw" style="left:880px;top:27px;height:16px"></div>
<div class="selframe nt" style="left:11px;top:26px;width:1060px;height:18px"></div>
<div class="arrow" style="left:5px;top:33px"></div>
<div class="trk" style="left:1072px;top:2px;width:16px;height:173px"></div>
<svg class="chev" style="left:1075px;top:8px" width="9" height="6" viewBox="0 0 9 6"><path d="M1.3 4.9 L4.5 1.7 L7.7 4.9" fill="none" stroke="#505050" stroke-width="2"/></svg>
<svg class="chev" style="left:1075px;top:164px" width="9" height="6" viewBox="0 0 9 6"><path d="M1.3 1.1 L4.5 4.3 L7.7 1.1" fill="none" stroke="#505050" stroke-width="2"/></svg>
<div class="trk" style="left:2px;top:175px;width:1070px;height:15px"></div>
<div class="blk" style="left:2px;top:174px;width:4px;height:16px"></div>
<svg class="chev" style="left:11px;top:178px" width="6" height="9" viewBox="0 0 6 9"><path d="M4.9 1.3 L1.7 4.5 L4.9 7.7" fill="none" stroke="#505050" stroke-width="2"/></svg>
<svg class="chev" style="left:1061px;top:178px" width="6" height="9" viewBox="0 0 6 9"><path d="M1.1 1.3 L4.3 4.5 L1.1 7.7" fill="none" stroke="#505050" stroke-width="2"/></svg>
</div>
<div id="g3" class="grid" style="left:1108px;top:486px;width:252px;height:192px">
<div class="ind" style="left:2px;top:2px;width:8px;height:23px"></div>
<div class="hfill" style="left:229px;top:2px;width:4px;height:23px"></div>
<div class="hc" style="left:11px;top:2px;width:40px;height:23px;line-height:22px">ID doc.</div>
<div class="hb" style="left:51px;top:2px;height:23px"></div>
<div class="hc" style="left:52px;top:2px;width:95px;height:23px;line-height:22px">Pagamento</div>
<div class="hb" style="left:147px;top:2px;height:23px"></div>
<div class="hc" style="left:148px;top:2px;width:80px;height:23px;line-height:22px">Vl.líquido</div>
<div class="hb" style="left:228px;top:2px;height:23px"></div>
<div class="hblk" style="left:10px;top:25px;width:223px"></div>
<div class="hblk" style="left:1px;top:25px;width:9px;background:#8c8c8c"></div>
<div class="row sel" style="left:11px;top:26px;width:222px;height:18px"></div>
<div class="c l w" style="left:11px;top:26px;width:40px">DI</div>
<div class="c l w lsn" style="left:52px;top:26px;width:95px">DINHEIRO</div>
<div class="c r w" style="left:148px;top:26px;width:80px">350,00</div>
<div class="ind" style="left:2px;top:26px;width:8px;height:17px"></div>
<div class="indl" style="left:1px;top:43px;width:9px"></div>
<div class="ind" style="left:2px;top:44px;width:8px;height:17px"></div>
<div class="indl" style="left:1px;top:61px;width:9px"></div>
<div class="ind" style="left:2px;top:62px;width:8px;height:17px"></div>
<div class="indl" style="left:1px;top:79px;width:9px"></div>
<div class="ind" style="left:2px;top:80px;width:8px;height:17px"></div>
<div class="indl" style="left:1px;top:97px;width:9px"></div>
<div class="ind" style="left:2px;top:98px;width:8px;height:17px"></div>
<div class="indl" style="left:1px;top:115px;width:9px"></div>
<div class="ind" style="left:2px;top:116px;width:8px;height:17px"></div>
<div class="indl" style="left:1px;top:133px;width:9px"></div>
<div class="ind" style="left:2px;top:134px;width:8px;height:17px"></div>
<div class="indl" style="left:1px;top:151px;width:9px"></div>
<div class="ind" style="left:2px;top:152px;width:8px;height:17px"></div>
<div class="indl" style="left:1px;top:169px;width:9px"></div>
<div class="ind" style="left:2px;top:170px;width:8px;height:5px"></div>
<div class="vblk" style="left:10px;top:2px;height:172px"></div>
<div class="vb" style="left:51px;top:26px;height:148px"></div>
<div class="vb" style="left:147px;top:26px;height:148px"></div>
<div class="vb" style="left:228px;top:26px;height:148px"></div>
<div class="vbw" style="left:51px;top:27px;height:16px"></div>
<div class="vbw" style="left:147px;top:27px;height:16px"></div>
<div class="vbw" style="left:228px;top:27px;height:16px"></div>
<div class="selframe nt" style="left:11px;top:26px;width:222px;height:18px"></div>
<div class="arrow" style="left:5px;top:33px"></div>
<div class="trk" style="left:234px;top:2px;width:16px;height:173px"></div>
<svg class="chev" style="left:237px;top:8px" width="9" height="6" viewBox="0 0 9 6"><path d="M1.3 4.9 L4.5 1.7 L7.7 4.9" fill="none" stroke="#505050" stroke-width="2"/></svg>
<svg class="chev" style="left:237px;top:164px" width="9" height="6" viewBox="0 0 9 6"><path d="M1.3 1.1 L4.5 4.3 L7.7 1.1" fill="none" stroke="#505050" stroke-width="2"/></svg>
<div class="trk" style="left:2px;top:175px;width:232px;height:15px"></div>
<div class="blk" style="left:2px;top:174px;width:4px;height:16px"></div>
<svg class="chev" style="left:11px;top:178px" width="6" height="9" viewBox="0 0 6 9"><path d="M4.9 1.3 L1.7 4.5 L4.9 7.7" fill="none" stroke="#505050" stroke-width="2"/></svg>
<svg class="chev" style="left:223px;top:178px" width="6" height="9" viewBox="0 0 6 9"><path d="M1.1 1.3 L4.3 4.5 L1.1 7.7" fill="none" stroke="#505050" stroke-width="2"/></svg>
</div>

<!-- red arrow -->
<svg class="abs" style="left:940px;top:280px;filter:drop-shadow(1px 2px 1px rgba(0,0,0,.45))" width="130" height="34" viewBox="940 280 130 34">
<path d="M947.4 288.4 L1041.2 293.6 L1041.8 288.4 L1063.6 297.2 L1040.6 303.6 L1041 297.8 L947.4 290.3 Z" fill="#fb0207"/>
</svg>

<!-- context menu -->
<div id="menu" class="abs">
<div class="mi" style="top:5px;font-weight:bold"><u>Z</u>oom</div>
<div class="mi" style="top:24px"><u>I</u>ncluir copiando</div>
<div class="mi" style="top:43px"><u>M</u>ostrar itens</div>
<div class="ms" style="top:64px"></div>
<div class="abs" style="left:1px;top:68px;width:206px;height:20px;background:#c8c8c8"></div>
<div class="abs" style="left:3px;top:68px;width:204px;height:20px;background:#0c74d4"></div>
<div class="mi" style="top:70px;color:#fff"><u>C</u>ancelar/Descancelar</div>
<div class="ms" style="top:90px"></div>
<div class="mi" style="top:97px">Desvincular venda da O.S.</div>
<div class="ms" style="top:117px"></div>
<div class="mi" style="top:124px;letter-spacing:.11px">Propriedades (CTRL+T)</div>
</div>
<div class="abs" style="left:1063px;top:286px;width:211px;height:25px;border:3px solid #fb0207"></div>
</body>
</html>
